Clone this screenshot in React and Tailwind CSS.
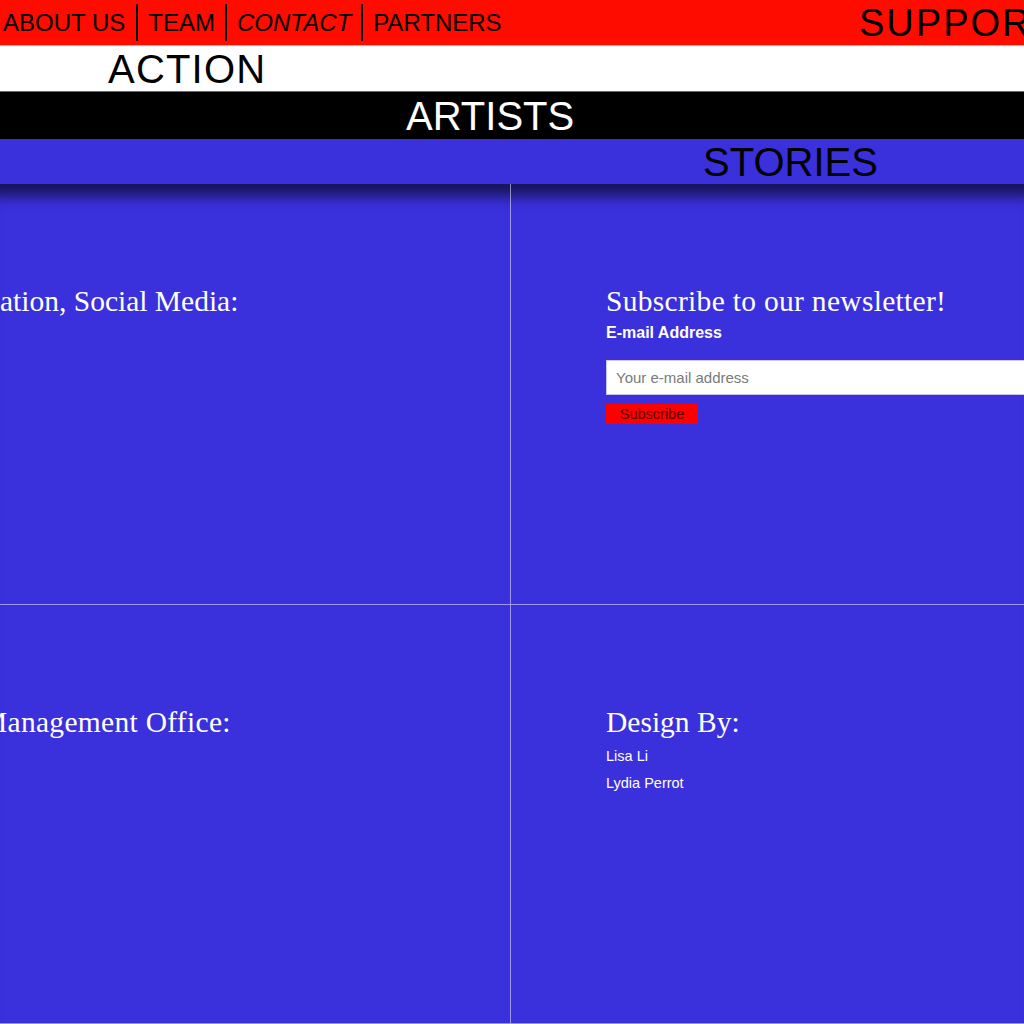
import React from 'react';

const sans = { fontFamily: '"Liberation Sans", Arial, sans-serif' };
const serif = { fontFamily: '"Liberation Serif", "Times New Roman", serif' };

const NavItem = ({ children, italic, last, first }) => (
  <div className={`flex h-[37px] items-center ${first ? 'px-[11px]' : 'px-[10px]'} ${last ? '' : 'border-r-2 border-black'}`}>
    <span className={`text-[24px] leading-none text-black ${italic ? 'italic' : ''}`}>{children}</span>
  </div>
);

export default function App() {
  return (
    <div className="w-[1024px] h-[1024px] overflow-hidden bg-[#3a30dc]" style={sans}>
      {/* top nav */}
      <div className="flex h-[46px] items-center bg-[#ff0c00] border-b border-[#ff9a9a]">
        <div className="-ml-[8px] flex w-[855px] shrink-0 items-center">
          <NavItem first>ABOUT US</NavItem>
          <NavItem>TEAM</NavItem>
          <NavItem italic>CONTACT</NavItem>
          <NavItem last>PARTNERS</NavItem>
        </div>
        <span className="shrink-0 whitespace-nowrap pl-[12px] text-[38px] leading-none tracking-[2px] text-black">SUPPORT</span>
      </div>

      <div className="flex h-[46px] items-center bg-white border-b border-[#6b6b6b] pl-[108px]">
        <span className="text-[40px] leading-none tracking-[1.2px] text-black">ACTION</span>
      </div>

      <div className="flex h-[47px] items-center bg-black pl-[406px]">
        <span className="text-[40px] leading-none text-white">ARTISTS</span>
      </div>

      <div className="flex h-[45px] items-center bg-[#3a30dc] pl-[703px]">
        <span className="text-[40px] leading-none text-black">STORIES</span>
      </div>

      {/* footer grid */}
      <div className="grid grid-cols-[510px_1px_600px] shadow-[inset_0_24px_14px_-12px_rgba(0,0,0,0.6)]">
        <div className="h-[420px] overflow-hidden pt-[100px]">
          <h2 className="whitespace-nowrap text-[29.5px] leading-[34px] text-white" style={serif}>ation, Social Media:</h2>
        </div>
        <div className="bg-white/50" />
        <div className="h-[420px] pl-[95px] pt-[100px]">
          <h2 className="whitespace-nowrap text-[29.5px] leading-[34px] tracking-[0.3px] text-white" style={serif}>Subscribe to our newsletter!</h2>
          <label className="mt-[6px] block text-[16px] font-bold leading-[18px] text-white">E-mail Address</label>
          <input
            type="email"
            placeholder="Your e-mail address"
            className="mt-[18px] block h-[35px] w-[440px] border border-[#c9c6f2] bg-white px-[9px] text-[15px] text-[#555] placeholder:text-[#7a7a7a] outline-none"
          />
          <button className="mt-[9px] flex h-[20px] w-[92px] items-center justify-center bg-[#ff0000] text-[14.5px] leading-none text-[#5a0000]">
            Subscribe
          </button>
        </div>

        <div className="col-span-3 h-px bg-white/50" />

        <div className="h-[418px] overflow-hidden pt-[100px]">
          <h2 className="-ml-[19px] whitespace-nowrap text-[29.5px] leading-[34px] tracking-[0.3px] text-white" style={serif}>Management Office:</h2>
        </div>
        <div className="bg-white/50" />
        <div className="h-[418px] pl-[95px] pt-[100px]">
          <h2 className="whitespace-nowrap text-[29.5px] leading-[34px] text-white" style={serif}>Design By:</h2>
          <p className="mt-[8px] text-[14.5px] leading-[18px] text-white">Lisa Li</p>
          <p className="mt-[9px] text-[14.5px] leading-[18px] text-white">Lydia Perrot</p>
        </div>

        <div className="col-span-3 h-px bg-white/50" />
      </div>
    </div>
  );
}
